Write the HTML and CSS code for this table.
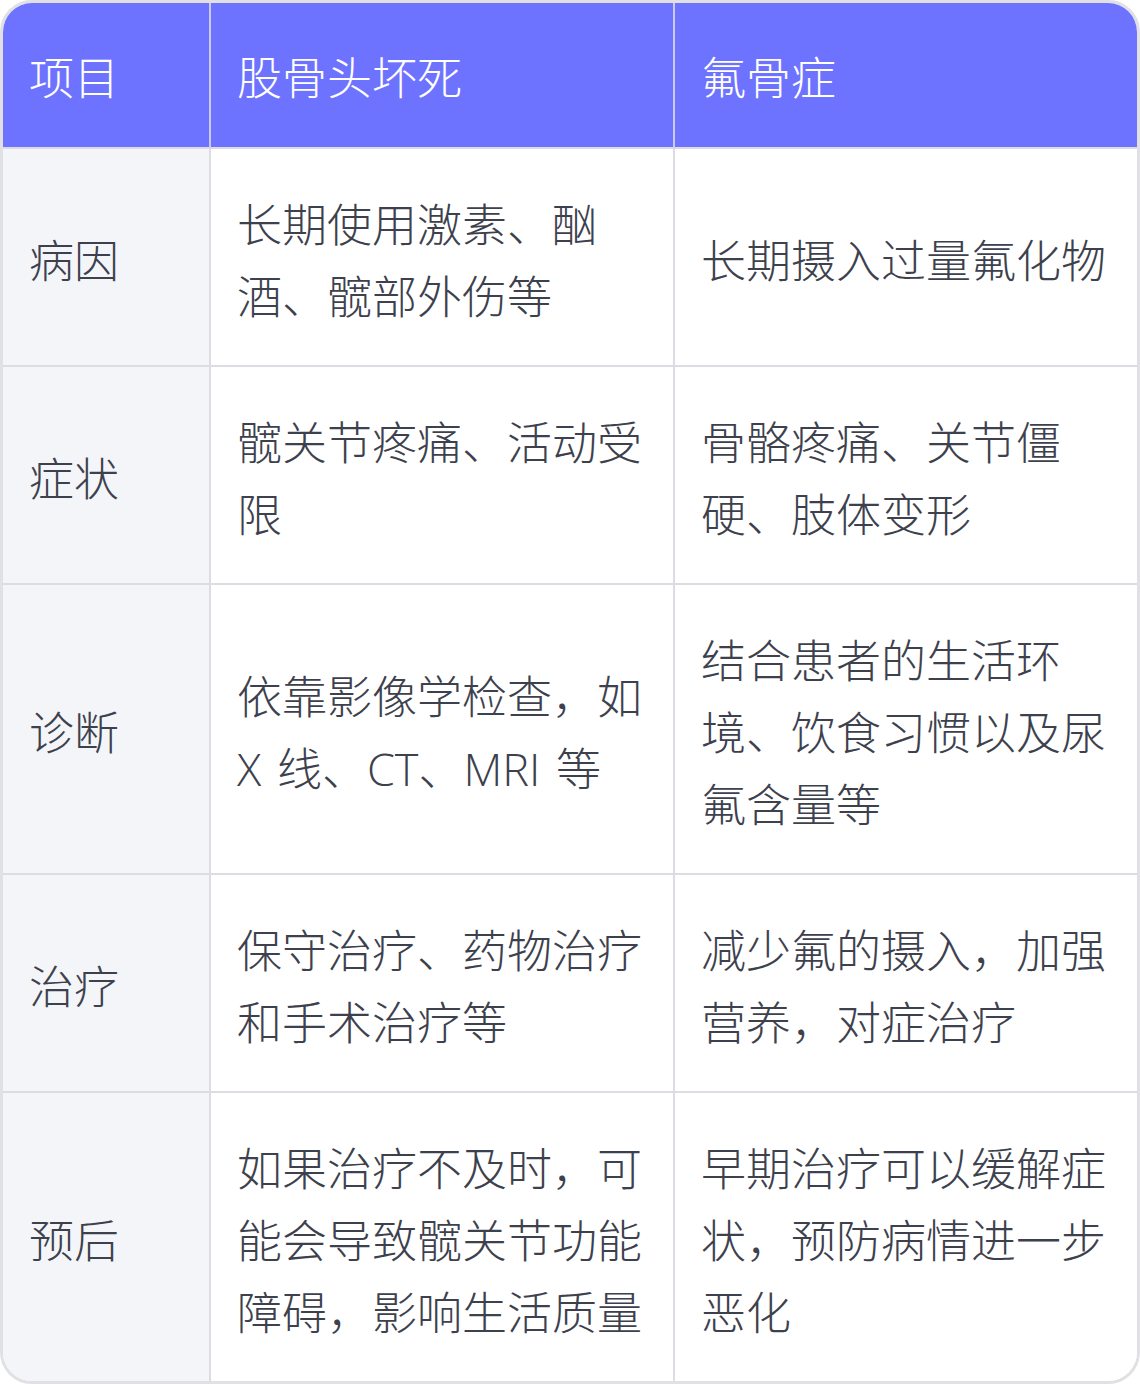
FILE: index.html
```html
<!DOCTYPE html>
<html lang="zh-CN">
<head>
<meta charset="utf-8">
<link rel="stylesheet" href="styles.css">
</head>
<body>
<div class="wrap">
<table class="cmp">
<colgroup><col class="c1"><col class="c2"><col class="c3"></colgroup>
<thead>
<tr><th>项目</th><th>股骨头坏死</th><th>氟骨症</th></tr>
</thead>
<tbody>
<tr><td>病因</td><td>长期使用激素、酗酒、髋部外伤等</td><td>长期摄入过量氟化物</td></tr>
<tr><td>症状</td><td>髋关节疼痛、活动受限</td><td>骨骼疼痛、关节僵硬、肢体变形</td></tr>
<tr><td>诊断</td><td>依靠影像学检查，如 X 线、CT、MRI 等</td><td>结合患者的生活环境、饮食习惯以及尿氟含量等</td></tr>
<tr><td>治疗</td><td>保守治疗、药物治疗和手术治疗等</td><td>减少氟的摄入，加强营养，对症治疗</td></tr>
<tr><td>预后</td><td>如果治疗不及时，可能会导致髋关节功能障碍，影响生活质量</td><td>早期治疗可以缓解症状，预防病情进一步恶化</td></tr>
</tbody>
</table>
</div>
</body>
</html>
```
FILE: styles.css
```css
html, body {
  margin: 0;
  padding: 0;
  background: #ffffff;
}
.wrap {
  width: 1140px;
  height: 1384px;
  box-sizing: border-box;
  border: 3px solid #e0e0e5;
  border-radius: 32px;
  overflow: hidden;
}
.cmp {
  width: 1134px;
  border-collapse: separate;
  border-spacing: 0;
  table-layout: fixed;
  font-family: "Open Sans", "Noto Sans CJK SC", sans-serif;
  font-weight: 300;
  font-size: 45px;
  line-height: 72px;
  color: #3d414d;
  word-spacing: 4px;
}
.c1 { width: 208px; }
.c2 { width: 464px; }
.c3 { width: 462px; }
.cmp th, .cmp td {
  padding: 40px 24px 32px 26px;
  text-align: left;
  vertical-align: middle;
  border-right: 2px solid #dcdce2;
  border-bottom: 2px solid #dcdce2;
  word-break: break-all;
}
.cmp th:last-child, .cmp td:last-child { border-right: none; }
.cmp tbody tr:last-child td { border-bottom: none; }
.cmp th {
  background: #6e73ff;
  color: #ffffff;
  font-weight: 300;
  padding-top: 39px;
  padding-bottom: 33px;
  border-right-color: #c9cbf0;
  border-bottom-color: #dcdce2;
}
.cmp td:first-child {
  background: #f4f5f9;
}
.cmp td { background: #ffffff; }
```
